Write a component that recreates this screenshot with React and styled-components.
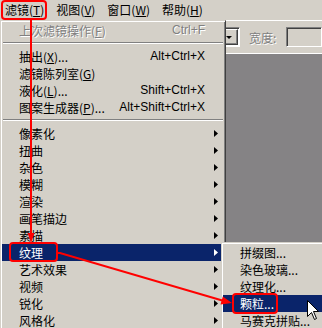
import React from 'react'
import styled, { createGlobalStyle } from 'styled-components'

const GlobalStyle = createGlobalStyle`
  html, body {
    margin: 0;
    padding: 0;
    background: #d4d0c8;
  }
`

const Screen = styled.div`
  position: relative;
  width: 322px;
  height: 328px;
  overflow: hidden;
  display: flex;
  flex-direction: column;
  background: #d4d0c8;
  color: #000;
  font-family: "Noto Sans CJK SC", "Liberation Sans", sans-serif;
  font-size: 12px;
`

const MenuBar = styled.div`
  height: 20px;
  display: flex;
  align-items: center;
`

const MenuBarItem = styled.span`
  padding: 0 5px;
  line-height: 20px;
  white-space: nowrap;
  & + & {
    margin-left: ${p => p.$gap || 0}px;
  }
`

const Workspace = styled.div`
  flex: 1;
  display: flex;
  flex-direction: column;
`

const Toolbar = styled.div`
  height: 34px;
  box-sizing: border-box;
  border-top: 1px solid #fff;
  border-bottom: 1px solid #fff;
  display: flex;
  align-items: center;
  padding-left: 150px;
`

const Combo = styled.div`
  display: flex;
  align-items: center;
  width: 101px;
  height: 20px;
  box-sizing: border-box;
  border: 1px solid;
  border-color: #808080 #fff #fff #808080;
  box-shadow: inset 1px 1px 0 #404040;
  background: #fff;
  padding: 1px 1px 1px 0;
`

const ComboButton = styled.span`
  margin-left: auto;
  width: 17px;
  height: 16px;
  box-sizing: border-box;
  border: 1px solid;
  border-color: #fff #404040 #404040 #fff;
  box-shadow: inset -1px -1px 0 #808080;
  background: #d4d0c8;
  display: flex;
  align-items: center;
  justify-content: center;
  &::after {
    content: '';
    width: 0;
    height: 0;
    border-top: 3px solid #000;
    border-left: 3px solid transparent;
    border-right: 3px solid transparent;
  }
`

const FieldLabel = styled.span`
  margin-left: 9px;
  color: #808080;
  text-shadow: 1px 1px 0 #fff;
  white-space: nowrap;
`

const Field = styled.div`
  margin-left: 10px;
  width: 40px;
  height: 20px;
  box-sizing: border-box;
  border: 1px solid;
  border-color: #808080 #fff #fff #808080;
  box-shadow: inset 1px 1px 0 #404040;
`

const Canvas = styled.div`
  flex: 1;
  background: #858385;
`

const Popup = styled.div`
  position: absolute;
  left: ${p => p.$left}px;
  top: ${p => p.$top}px;
  width: ${p => p.$width}px;
  box-sizing: border-box;
  border: 1px solid;
  border-color: #d4d0c8 #404040 #404040 #d4d0c8;
  box-shadow: inset 1px 1px 0 #fff, inset -1px -1px 0 #808080;
  background: #d4d0c8;
  padding: 1px;
`

const Row = styled.div`
  display: flex;
  align-items: center;
  height: 17px;
  padding-left: 17px;
  white-space: nowrap;
  background: ${p => (p.$active ? '#0a246a' : 'transparent')};
  color: ${p => (p.$active ? '#fff' : p.$disabled ? '#808080' : '#000')};
  text-shadow: ${p => (p.$disabled ? '1px 1px 0 #fff' : 'none')};
`

const Label = styled.span`
  flex: 1;
  line-height: 17px;
`

const Shortcut = styled.span`
  font-family: "Liberation Sans", sans-serif;
  font-size: 12px;
  line-height: 17px;
`

const ArrowCell = styled.span`
  width: 19px;
  height: 17px;
  display: flex;
  align-items: center;
  &::after {
    content: '';
    display: ${p => (p.$show ? 'block' : 'none')};
    margin-left: 9px;
    width: 4px;
    height: 7px;
    background: currentColor;
    clip-path: polygon(0 0, 100% 50%, 0 100%);
  }
`

const Separator = styled.div`
  margin: 3px 1px 4px;
  border-top: 1px solid #808080;
  border-bottom: 1px solid #fff;
`

const Overlay = styled.svg`
  position: absolute;
  left: 0;
  top: 0;
  pointer-events: none;
`

const filterItems = [
  { label: '上次滤镜操作', key: 'F', shortcut: 'Ctrl+F', disabled: true },
  'sep',
  { label: '抽出', key: 'X', dots: true, shortcut: 'Alt+Ctrl+X' },
  { label: '滤镜陈列室', key: 'G' },
  { label: '液化', key: 'L', dots: true, shortcut: 'Shift+Ctrl+X' },
  { label: '图案生成器', key: 'P', dots: true, shortcut: 'Alt+Shift+Ctrl+X' },
  'sep',
  { label: '像素化', sub: true },
  { label: '扭曲', sub: true },
  { label: '杂色', sub: true },
  { label: '模糊', sub: true },
  { label: '渲染', sub: true },
  { label: '画笔描边', sub: true },
  { label: '素描', sub: true },
  { label: '纹理', sub: true, active: true },
  { label: '艺术效果', sub: true },
  { label: '视频', sub: true },
  { label: '锐化', sub: true },
  { label: '风格化', sub: true },
]

const textureItems = [
  { label: '拼缀图...' },
  { label: '染色玻璃...' },
  { label: '纹理化...' },
  { label: '颗粒...', active: true },
  { label: '马赛克拼贴...' },
]

const MenuLabel = ({ item }) => (
  <Label>
    {item.label}
    {item.key && (
      <>
        (<u>{item.key}</u>)
      </>
    )}
    {item.dots && '...'}
  </Label>
)

const App = () => (
  <Screen>
    <GlobalStyle />
    <MenuBar>
      <MenuBarItem>滤镜(<u>T</u>)</MenuBarItem>
      <MenuBarItem>视图(<u>V</u>)</MenuBarItem>
      <MenuBarItem>窗口(<u>W</u>)</MenuBarItem>
      <MenuBarItem $gap={2}>帮助(<u>H</u>)</MenuBarItem>
    </MenuBar>
    <Workspace>
      <Toolbar>
        <Combo>
          <ComboButton />
        </Combo>
        <FieldLabel>宽度:</FieldLabel>
        <Field />
      </Toolbar>
      <Canvas />
    </Workspace>

    <Popup $left={0} $top={20} $width={226}>
      {filterItems.map((item, i) =>
        item === 'sep' ? (
          <Separator key={i} />
        ) : (
          <Row key={i} $active={item.active} $disabled={item.disabled}>
            <MenuLabel item={item} />
            {item.shortcut && <Shortcut>{item.shortcut}</Shortcut>}
            <ArrowCell $show={item.sub} />
          </Row>
        )
      )}
    </Popup>

    <Popup $left={221} $top={242} $width={130}>
      {textureItems.map((item, i) => (
        <Row key={i} $active={item.active}>
          <MenuLabel item={item} />
        </Row>
      ))}
    </Popup>

    <Overlay width="322" height="328" viewBox="0 0 322 328">
      <g fill="none" stroke="#f00" strokeWidth="2">
        <rect x="2" y="1" width="44" height="18" rx="3" />
        <rect x="10" y="243" width="47" height="18" rx="3" />
        <rect x="233" y="294" width="44" height="19" rx="3" />
        <line x1="31" y1="19" x2="31" y2="236" />
        <polyline points="57,253 60,253 224,301" />
      </g>
      <g fill="#f00">
        <polygon points="27.5,233 34.5,233 31,243" />
        <polygon points="220.5,304.5 222.8,296.5 232,303" />
      </g>
      <path
        d="M307.5 300.5 L307.5 316.5 L311.5 312.5 L314.5 319.5 L316.5 318.5 L313.5 311.5 L318.5 311.5 Z"
        fill="#fff"
        stroke="#000"
        strokeWidth="1"
        strokeLinejoin="miter"
      />
    </Overlay>
  </Screen>
)

export default App
